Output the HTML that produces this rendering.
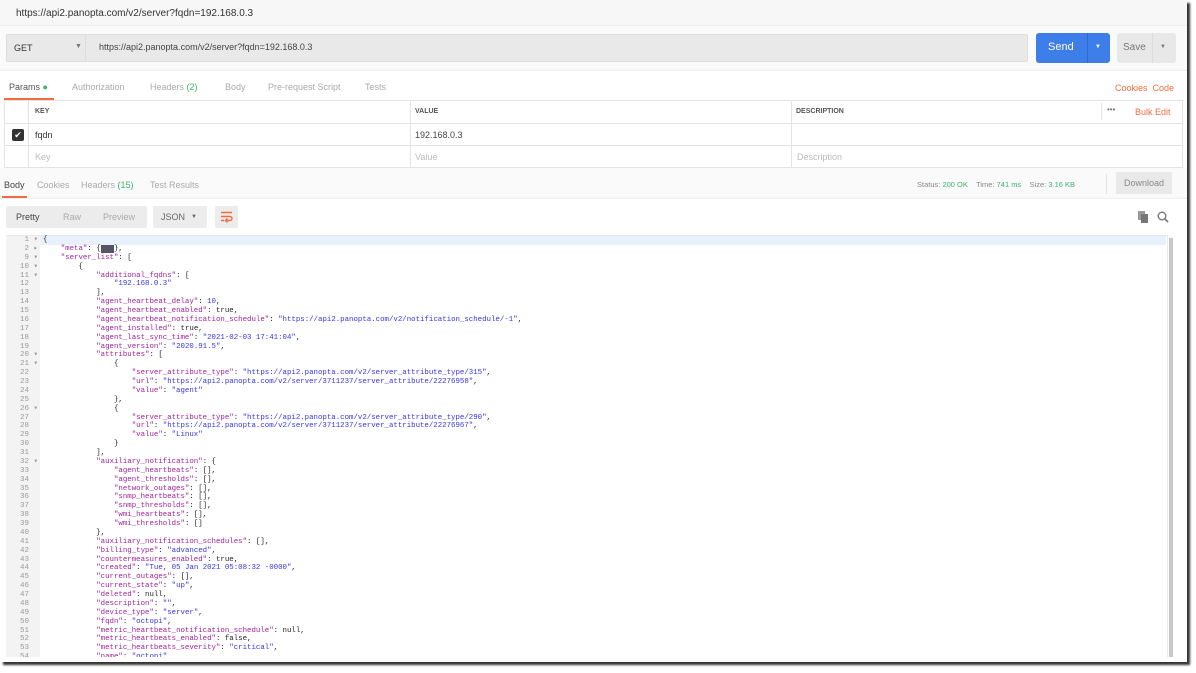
<!DOCTYPE html>
<html><head><meta charset="utf-8"><style>
*{margin:0;padding:0;box-sizing:border-box}
body{width:1196px;height:673px;background:#fff;font-family:"Liberation Sans",sans-serif;position:relative;overflow:hidden}
.frame{position:absolute;left:0;top:0;width:1187px;height:662px;background:#fff;box-shadow:3px 3px 2px #333}
.a{position:absolute;white-space:nowrap}
.code{position:absolute;left:43px;top:236px;font-family:"Liberation Mono",monospace;font-size:7.4px;line-height:8.87px;white-space:pre;color:#222}
.ln{position:absolute;left:6px;top:236px;width:34px;height:422px;background:#f3f3f3;font-family:"Liberation Mono",monospace;font-size:7.5px;line-height:8.87px;color:#999;text-align:right;white-space:pre;padding-right:2px}
.k{color:#a0229a}.s{color:#3434e6}
</style></head><body>
<div class="frame">
<div class="a" style="left:0;top:0;width:1187px;height:26px;background:#f7f7f7;border-bottom:1px solid #eee"></div>
<div class="a" style="left:16px;top:8px;font-size:10px;color:#333">https://api2.panopta.com/v2/server?fqdn=192.168.0.3</div>
<div class="a" style="left:0;top:26px;width:1187px;height:45px;background:#fafafa;border-bottom:1px solid #eee"></div>
<div class="a" style="left:6px;top:34px;width:1022px;height:28px;background:#e9e9e9;border:1px solid #ddd;border-radius:2px"></div>
<div class="a" style="left:85px;top:34px;width:1px;height:28px;background:#ddd"></div>
<div class="a" style="left:14px;top:43px;font-size:9px;color:#333">GET</div>
<div class="a" style="left:75px;top:43px;font-size:7px;color:#777">▼</div>
<div class="a" style="left:99px;top:42px;font-size:9px;color:#444">https://api2.panopta.com/v2/server?fqdn=192.168.0.3</div>
<div class="a" style="left:1036px;top:33px;width:74px;height:30px;background:#3e7ee8;border-radius:3px"></div>
<div class="a" style="left:1087px;top:33px;width:1px;height:30px;background:#2f6bcf"></div>
<div class="a" style="left:1048px;top:41px;font-size:11px;color:#fff">Send</div>
<div class="a" style="left:1095px;top:44px;font-size:6px;color:#fff">▼</div>
<div class="a" style="left:1117px;top:33px;width:59px;height:30px;background:#e8e8e8;border-radius:3px"></div>
<div class="a" style="left:1152px;top:33px;width:1px;height:30px;background:#ddd"></div>
<div class="a" style="left:1123px;top:42px;font-size:10px;color:#777">Save</div>
<div class="a" style="left:1160px;top:44px;font-size:6px;color:#777">▼</div>
<div class="a" style="left:9px;top:82px;font-size:9px;color:#555">Params <span style="color:#3cb371">●</span></div>
<div class="a" style="left:4px;top:98px;width:50px;height:2px;background:#f06d3f"></div>
<div class="a" style="left:72px;top:82px;font-size:9px;color:#aaa">Authorization</div>
<div class="a" style="left:150px;top:82px;font-size:9px;color:#aaa">Headers <span style="color:#3cb371">(2)</span></div>
<div class="a" style="left:225px;top:82px;font-size:9px;color:#aaa">Body</div>
<div class="a" style="left:268px;top:82px;font-size:9px;color:#aaa">Pre-request Script</div>
<div class="a" style="left:365px;top:82px;font-size:9px;color:#aaa">Tests</div>
<div class="a" style="left:1115px;top:83px;font-size:9px;color:#f06d3f">Cookies&nbsp; Code</div>
<div class="a" style="left:4px;top:100px;width:1179px;height:68px;border:1px solid #e3e3e3"></div>
<div class="a" style="left:4px;top:123px;width:1179px;height:1px;background:#e3e3e3"></div>
<div class="a" style="left:4px;top:145px;width:1179px;height:1px;background:#e3e3e3"></div>
<div class="a" style="left:28px;top:100px;width:1px;height:68px;background:#e3e3e3"></div>
<div class="a" style="left:410px;top:100px;width:1px;height:68px;background:#e3e3e3"></div>
<div class="a" style="left:791px;top:100px;width:1px;height:68px;background:#e3e3e3"></div>
<div class="a" style="left:1101px;top:103px;width:1px;height:17px;background:#e3e3e3"></div>
<div class="a" style="left:35px;top:108px;font-size:7px;font-weight:bold;color:#555">KEY</div>
<div class="a" style="left:415px;top:108px;font-size:7px;font-weight:bold;color:#555">VALUE</div>
<div class="a" style="left:796px;top:108px;font-size:7px;font-weight:bold;color:#555">DESCRIPTION</div>
<div class="a" style="left:1107px;top:105px;font-size:8px;color:#777">•••</div>
<div class="a" style="left:1135px;top:107px;font-size:9px;color:#f06d3f">Bulk Edit</div>
<div class="a" style="left:12px;top:129px;width:12px;height:12px;background:#333;border-radius:2px;color:#fff;font-size:9px;line-height:12px;text-align:center">✔</div>
<div class="a" style="left:35px;top:130px;font-size:9px;color:#333">fqdn</div>
<div class="a" style="left:415px;top:130px;font-size:9px;color:#444">192.168.0.3</div>
<div class="a" style="left:35px;top:152px;font-size:9px;color:#bbb">Key</div>
<div class="a" style="left:415px;top:152px;font-size:9px;color:#bbb">Value</div>
<div class="a" style="left:797px;top:152px;font-size:9px;color:#bbb">Description</div>
<div class="a" style="left:0;top:168px;width:1187px;height:31px;background:#fafafa;border-bottom:1px solid #eee"></div>
<div class="a" style="left:4px;top:180px;font-size:9px;color:#444">Body</div>
<div class="a" style="left:2px;top:196px;width:25px;height:2px;background:#f06d3f"></div>
<div class="a" style="left:37px;top:180px;font-size:9px;color:#aaa">Cookies</div>
<div class="a" style="left:81px;top:180px;font-size:9px;color:#aaa">Headers <span style="color:#3cb371">(15)</span></div>
<div class="a" style="left:150px;top:180px;font-size:9px;color:#aaa">Test Results</div>
<div class="a" style="left:917px;top:180px;font-size:7.5px;color:#888">Status: <span style="color:#3cb371">200 OK</span>&nbsp;&nbsp;&nbsp; Time: <span style="color:#3cb371">741 ms</span>&nbsp;&nbsp;&nbsp; Size: <span style="color:#3cb371">3.16 KB</span></div>
<div class="a" style="left:1106px;top:174px;width:1px;height:20px;background:#e3e3e3"></div>
<div class="a" style="left:1116px;top:172px;width:56px;height:22px;background:#e9e9e9;border-radius:2px;font-size:9px;color:#888;line-height:22px;text-align:center">Download</div>
<div class="a" style="left:6px;top:206px;width:141px;height:22px;background:#ececec;border-radius:2px"></div>
<div class="a" style="left:16px;top:212px;font-size:9px;color:#444">Pretty</div>
<div class="a" style="left:63px;top:212px;font-size:9px;color:#aaa">Raw</div>
<div class="a" style="left:103px;top:212px;font-size:9px;color:#aaa">Preview</div>
<div class="a" style="left:153px;top:206px;width:54px;height:22px;background:#ececec;border-radius:2px"></div>
<div class="a" style="left:161px;top:212px;font-size:9px;color:#666">JSON</div>
<div class="a" style="left:191px;top:214px;font-size:6px;color:#666">▼</div>
<div class="a" style="left:215px;top:206px;width:23px;height:22px;background:#ececec;border-radius:2px"></div>
<svg class="a" style="left:220px;top:211px" width="13" height="12" viewBox="0 0 13 12"><path d="M1 1.5H12M1 5.5H10a2 2 0 0 1 0 4H6M1 9.5H4M7.5 7.5 5.5 9.5 7.5 11.5" stroke="#f06d3f" stroke-width="1.4" fill="none"/></svg>
<svg class="a" style="left:1138px;top:211px" width="11" height="12" viewBox="0 0 11 12"><rect x="0" y="0" width="7" height="9" fill="#999"/><rect x="3" y="3" width="7" height="9" fill="#777"/></svg>
<svg class="a" style="left:1157px;top:211px" width="12" height="12" viewBox="0 0 12 12"><circle cx="5" cy="5" r="3.8" stroke="#777" stroke-width="1.4" fill="none"/><path d="M8 8 11 11" stroke="#777" stroke-width="1.6"/></svg>
<div class="a" style="left:6px;top:235px;width:1162px;height:424px;border:1px solid #eaeaea"></div>
<div class="a" style="left:40px;top:236px;width:1126px;height:9px;background:#e8f0fb"></div>
<div class="a" style="left:1169px;top:238px;width:4px;height:420px;background:#c8c8c8"></div>
<div class="ln">1 ▾
2 ▸
9 ▾
10 ▾
11 ▾
12  
13  
14  
15  
16  
17  
18  
19  
20 ▾
21 ▾
22  
23  
24  
25  
26 ▾
27  
28  
29  
30  
31  
32 ▾
33  
34  
35  
36  
37  
38  
39  
40  
41  
42  
43  
44  
45  
46  
47  
48  
49  
50  
51  
52  
53  
54  </div>
<div class="code">{
    <span class="k">"meta"</span>: {<span style="background:#556;color:#556">...</span>},
    <span class="k">"server_list"</span>: [
        {
            <span class="k">"additional_fqdns"</span>: [
                <span class="s">"192.168.0.3"</span>
            ],
            <span class="k">"agent_heartbeat_delay"</span>: <span class="s">10</span>,
            <span class="k">"agent_heartbeat_enabled"</span>: true,
            <span class="k">"agent_heartbeat_notification_schedule"</span>: <span class="s">"https://api2.panopta.com/v2/notification_schedule/-1"</span>,
            <span class="k">"agent_installed"</span>: true,
            <span class="k">"agent_last_sync_time"</span>: <span class="s">"2021-02-03 17:41:04"</span>,
            <span class="k">"agent_version"</span>: <span class="s">"2020.91.5"</span>,
            <span class="k">"attributes"</span>: [
                {
                    <span class="k">"server_attribute_type"</span>: <span class="s">"https://api2.panopta.com/v2/server_attribute_type/315"</span>,
                    <span class="k">"url"</span>: <span class="s">"https://api2.panopta.com/v2/server/3711237/server_attribute/22276958"</span>,
                    <span class="k">"value"</span>: <span class="s">"agent"</span>
                },
                {
                    <span class="k">"server_attribute_type"</span>: <span class="s">"https://api2.panopta.com/v2/server_attribute_type/290"</span>,
                    <span class="k">"url"</span>: <span class="s">"https://api2.panopta.com/v2/server/3711237/server_attribute/22276967"</span>,
                    <span class="k">"value"</span>: <span class="s">"Linux"</span>
                }
            ],
            <span class="k">"auxiliary_notification"</span>: {
                <span class="k">"agent_heartbeats"</span>: [],
                <span class="k">"agent_thresholds"</span>: [],
                <span class="k">"network_outages"</span>: [],
                <span class="k">"snmp_heartbeats"</span>: [],
                <span class="k">"snmp_thresholds"</span>: [],
                <span class="k">"wmi_heartbeats"</span>: [],
                <span class="k">"wmi_thresholds"</span>: []
            },
            <span class="k">"auxiliary_notification_schedules"</span>: [],
            <span class="k">"billing_type"</span>: <span class="s">"advanced"</span>,
            <span class="k">"countermeasures_enabled"</span>: true,
            <span class="k">"created"</span>: <span class="s">"Tue, 05 Jan 2021 05:08:32 -0000"</span>,
            <span class="k">"current_outages"</span>: [],
            <span class="k">"current_state"</span>: <span class="s">"up"</span>,
            <span class="k">"deleted"</span>: null,
            <span class="k">"description"</span>: <span class="s">""</span>,
            <span class="k">"device_type"</span>: <span class="s">"server"</span>,
            <span class="k">"fqdn"</span>: <span class="s">"octopi"</span>,
            <span class="k">"metric_heartbeat_notification_schedule"</span>: null,
            <span class="k">"metric_heartbeats_enabled"</span>: false,
            <span class="k">"metric_heartbeats_severity"</span>: <span class="s">"critical"</span>,
            <span class="k">"name"</span>: <span class="s">"octopi"</span></div>
<div class="a" style="left:0;top:657px;width:1187px;height:5px;background:#fff"></div>
</div>
</body></html>
